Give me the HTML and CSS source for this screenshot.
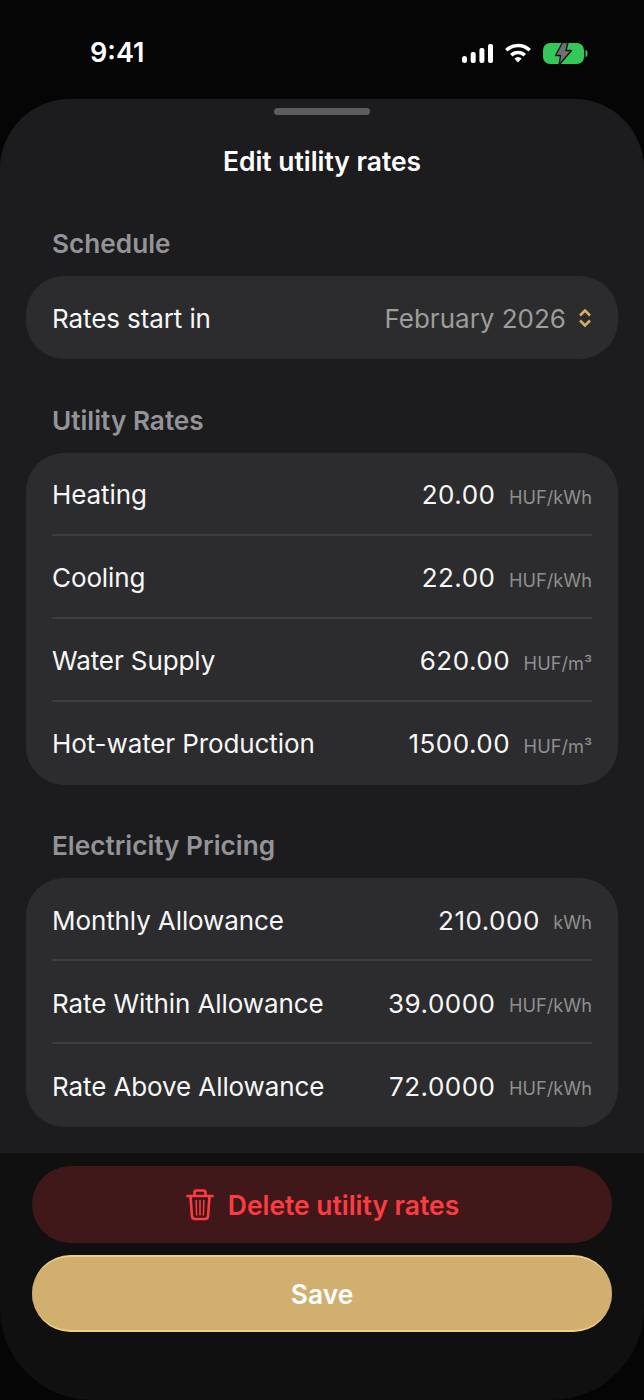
FILE: index.html
```html
<!DOCTYPE html>
<html lang="en">
<head>
  <meta charset="UTF-8" />
  <meta name="viewport" content="width=device-width, initial-scale=1.0"/>
  <title>Edit utility rates</title>
  <link rel="stylesheet" href="styles.css">
</head>
<body>
  <div class="status-bar">
    <span class="time">9:41</span>
    <div class="status-icons">
      <svg class="signal" width="31" height="21" viewBox="0 0 31 21">
        <rect x="0" y="13" width="5" height="7" rx="2.5" />
        <rect x="8.7" y="9" width="5" height="11" rx="2" />
        <rect x="17.4" y="5" width="5" height="15" rx="2" />
        <rect x="26" y="1" width="5" height="19" rx="2" />
      </svg>
      <svg class="wifi" width="26" height="21" viewBox="0 0 26 21">
        <path d="M1.3 7.3 A16.5 16.5 0 0 1 24.7 7.3" />
        <path d="M6.3 12.3 A9.5 9.5 0 0 1 19.7 12.3" />
        <path class="wifi-dot" d="M13 19.5 L9.4 15.6 A5 5 0 0 1 16.6 15.6 Z" />
      </svg>
      <svg class="battery" width="44" height="21" viewBox="0 0 44 21">
        <rect x="0" y="0" width="41" height="21" rx="7" fill="#34c759" />
        <path d="M42.5 7 a2 3.5 0 0 1 0 7 z" fill="#34c759" />
        <path d="M25 -0.5 H19.5 L12.5 12.5 H17.5 L16 22 L28.5 7.5 H23 Z" fill="#707072" stroke="#111" stroke-width="1.3" stroke-linejoin="round" />
      </svg>
    </div>
  </div>

  <div class="sheet">
    <div class="sheet-body">
      <div class="grabber"></div>
      <h1>Edit utility rates</h1>

      <h2>Schedule</h2>
      <div class="card">
        <div class="row">
          <span class="row-label">Rates start in</span>
          <span class="month">February 2026</span>
          <svg class="chevrons" width="14" height="18" viewBox="0 0 14 18">
            <path d="M2 6.5 L7 1.5 L12 6.5" />
            <path d="M2 11.5 L7 16.5 L12 11.5" />
          </svg>
        </div>
      </div>

      <h2>Utility Rates</h2>
      <div class="card">
        <div class="row">
          <span class="row-label">Heating</span>
          <span class="value">20.00</span>
          <span class="unit">HUF/kWh</span>
        </div>
        <div class="row">
          <span class="row-label">Cooling</span>
          <span class="value">22.00</span>
          <span class="unit">HUF/kWh</span>
        </div>
        <div class="row">
          <span class="row-label">Water Supply</span>
          <span class="value">620.00</span>
          <span class="unit">HUF/m³</span>
        </div>
        <div class="row">
          <span class="row-label">Hot-water Production</span>
          <span class="value">1500.00</span>
          <span class="unit">HUF/m³</span>
        </div>
      </div>

      <h2>Electricity Pricing</h2>
      <div class="card">
        <div class="row">
          <span class="row-label">Monthly Allowance</span>
          <span class="value">210.000</span>
          <span class="unit">kWh</span>
        </div>
        <div class="row">
          <span class="row-label">Rate Within Allowance</span>
          <span class="value">39.0000</span>
          <span class="unit">HUF/kWh</span>
        </div>
        <div class="row">
          <span class="row-label">Rate Above Allowance</span>
          <span class="value">72.0000</span>
          <span class="unit">HUF/kWh</span>
        </div>
      </div>
    </div>

    <div class="actions">
      <button class="btn btn-delete">
        <svg class="trash" width="26" height="32" viewBox="1 0 26 32">
          <path d="M1.5 7 H26.5" />
          <path d="M8.5 6.5 V3.5 a2 2 0 0 1 2 -2 h7 a2 2 0 0 1 2 2 V6.5" />
          <path d="M4.5 7.5 L6 27.5 a3 3 0 0 0 3 2.5 h10 a3 3 0 0 0 3 -2.5 L23.5 7.5" />
          <path class="thin" d="M10.2 11.5 L10.6 26 M14 11.5 V26 M17.8 11.5 L17.4 26" />
        </svg>
        Delete utility rates
      </button>
      <button class="btn btn-save">Save</button>
    </div>
  </div>
</body>
</html>
```

FILE: styles.css
```css
* {
  box-sizing: border-box;
}

body {
  margin: 0;
  width: 644px;
  height: 1400px;
  overflow: hidden;
  background: #050505;
  color: #fff;
  font-family: Inter, 'Noto Sans', sans-serif;
}

.status-bar {
  height: 99px;
  display: flex;
  justify-content: space-between;
  align-items: flex-start;
  padding: 36px 57px 0 90px;
}

.time {
  font-size: 27px;
  font-weight: 600;
  line-height: 34px;
}

.status-icons {
  display: flex;
  align-items: center;
  gap: 12px;
  padding-top: 7px;
}

.signal {
  fill: #fff;
}

.wifi path {
  fill: none;
  stroke: #fff;
  stroke-width: 3.6;
}

.wifi .wifi-dot {
  fill: #fff;
  stroke: none;
}

.battery {
  overflow: visible;
}

.sheet {
  height: 1301px;
  display: flex;
  flex-direction: column;
  background: #101011;
  border-radius: 70px 70px 92px 92px;
  overflow: hidden;
}

.sheet-body {
  height: 1054px;
  flex-shrink: 0;
  padding: 9px 26px 0;
  background: #1c1c1e;
}

.grabber {
  width: 96px;
  height: 7px;
  margin: 0 auto;
  border-radius: 4px;
  background: #5c5c60;
}

h1 {
  margin: 28px 0 0;
  text-align: center;
  font-size: 26.4px;
  font-weight: 600;
  line-height: 36px;
}

h2 {
  margin: 48px 0 15px 26px;
  color: #939398;
  font-size: 26.2px;
  font-weight: 600;
  line-height: 34px;
}

.card {
  background: #2c2c2e;
  border-radius: 38px;
  padding: 0 26px;
}

.card + h2 {
  margin-top: 44.5px;
}

/* text sits a little low in the row, the divider closes it off */
.row {
  height: 83px;
  display: flex;
  align-items: center;
  padding-top: 3px;
  border-bottom: 2px solid #3d3d40;
  font-size: 26px;
}

.row:last-child {
  border-bottom-color: transparent;
}

.row-label {
  margin-right: auto;
  color: #f7f7f7;
  letter-spacing: -0.1px;
}

.value {
  color: #f7f7f7;
  letter-spacing: 0.5px;
}

.unit {
  margin: 4px 0 0 13.5px;
  color: #8f8f8f;
  font-size: 18.2px;
}

.month {
  color: #9d9d99;
}

.chevrons {
  margin-left: 12px;
}

.chevrons path {
  fill: none;
  stroke: #d9ab5f;
  stroke-width: 2.6;
}

.actions {
  flex: 1;
  display: flex;
  flex-direction: column;
  gap: 12px;
  padding: 13px 32px 0;
}

.btn {
  height: 77px;
  display: flex;
  align-items: center;
  justify-content: center;
  gap: 15px;
  border: 0;
  border-radius: 38.5px;
  font-family: inherit;
  font-size: 26.4px;
  font-weight: 600;
}

.btn-delete {
  padding-left: 8px;
  background: #401819;
  color: #ff3b42;
}

.btn-save {
  background: #d0af6f;
  color: #fff;
  border-top: 2px solid #f2cd7e;
  border-bottom: 2px solid #f2cd7e;
}

.trash {
  overflow: visible;
}

.trash path {
  fill: none;
  stroke: #ff3b42;
  stroke-width: 2.6;
  stroke-linecap: round;
  stroke-linejoin: round;
}

.trash .thin {
  stroke-width: 1.5;
}
```
